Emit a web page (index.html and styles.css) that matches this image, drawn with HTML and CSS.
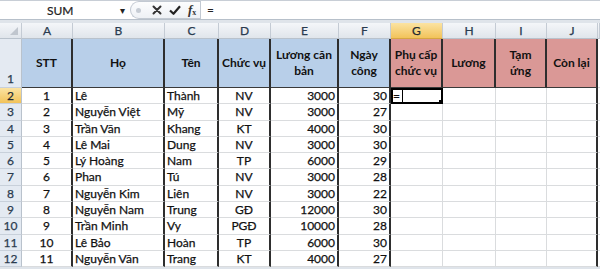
FILE: index.html
```html
<!DOCTYPE html>
<html lang="vi">
<head>
    <meta charset="UTF-8">
    <meta name="viewport" content="width=device-width, initial-scale=1.0">
    <title>Bảng lương</title>
    <link rel="stylesheet" href="styles.css">
</head>
<body>
    <div class="formula-bar">
        <div class="name-box">
            <span class="name">SUM</span>
            <span class="drop">&#9662;</span>
        </div>
        <div class="fx-tools">
            <span class="grip"></span>
            <svg class="ico" viewBox="0 0 10 10" width="10" height="10">
                <path d="M1.5 1.5 L8.5 8.5 M8.5 1.5 L1.5 8.5" stroke="#333" stroke-width="2" stroke-linecap="round"/>
            </svg>
            <svg class="ico" viewBox="0 0 12 10" width="12" height="10">
                <path d="M1 5.5 L4.5 8.8 L11 1.2" stroke="#222" stroke-width="2.2" fill="none" stroke-linejoin="round"/>
            </svg>
            <span class="fx"><i>f</i><sub>x</sub></span>
        </div>
        <div class="formula-input">=</div>
    </div>

    <div class="sheet">
        <div class="heads">
            <div class="h corner"></div>
            <div class="h">A</div>
            <div class="h">B</div>
            <div class="h">C</div>
            <div class="h">D</div>
            <div class="h">E</div>
            <div class="h">F</div>
            <div class="h active">G</div>
            <div class="h">H</div>
            <div class="h">I</div>
            <div class="h">J</div>
            <div class="h"></div>
        </div>

        <div class="row title">
            <div class="c rh">1</div>
            <div class="c blue">STT</div>
            <div class="c blue">Họ</div>
            <div class="c blue">Tên</div>
            <div class="c blue">Chức vụ</div>
            <div class="c blue">Lương căn<br>bản</div>
            <div class="c blue">Ngày<br>công</div>
            <div class="c pink">Phụ cấp<br>chức vụ</div>
            <div class="c pink">Lương</div>
            <div class="c pink">Tạm<br>ứng</div>
            <div class="c pink">Còn lại</div>
            <div class="c"></div>
        </div>

        <div class="row">
            <div class="c rh active">2</div>
            <div class="c ctr">1</div><div class="c">Lê</div><div class="c">Thành</div><div class="c ctr">NV</div>
            <div class="c num">3000</div><div class="c num">30</div>
            <div class="c cur"><span class="caret">=</span></div><div class="c"></div><div class="c"></div><div class="c"></div><div class="c"></div>
        </div>
        <div class="row">
            <div class="c rh">3</div>
            <div class="c ctr">2</div><div class="c">Nguyễn Việt</div><div class="c">Mỹ</div><div class="c ctr">NV</div>
            <div class="c num">3000</div><div class="c num">27</div>
            <div class="c"></div><div class="c"></div><div class="c"></div><div class="c"></div><div class="c"></div>
        </div>
        <div class="row">
            <div class="c rh">4</div>
            <div class="c ctr">3</div><div class="c">Trần Văn</div><div class="c">Khang</div><div class="c ctr">KT</div>
            <div class="c num">4000</div><div class="c num">30</div>
            <div class="c"></div><div class="c"></div><div class="c"></div><div class="c"></div><div class="c"></div>
        </div>
        <div class="row">
            <div class="c rh">5</div>
            <div class="c ctr">4</div><div class="c">Lê Mai</div><div class="c">Dung</div><div class="c ctr">NV</div>
            <div class="c num">3000</div><div class="c num">30</div>
            <div class="c"></div><div class="c"></div><div class="c"></div><div class="c"></div><div class="c"></div>
        </div>
        <div class="row">
            <div class="c rh">6</div>
            <div class="c ctr">5</div><div class="c">Lý Hoàng</div><div class="c">Nam</div><div class="c ctr">TP</div>
            <div class="c num">6000</div><div class="c num">29</div>
            <div class="c"></div><div class="c"></div><div class="c"></div><div class="c"></div><div class="c"></div>
        </div>
        <div class="row">
            <div class="c rh">7</div>
            <div class="c ctr">6</div><div class="c">Phan</div><div class="c">Tú</div><div class="c ctr">NV</div>
            <div class="c num">3000</div><div class="c num">28</div>
            <div class="c"></div><div class="c"></div><div class="c"></div><div class="c"></div><div class="c"></div>
        </div>
        <div class="row">
            <div class="c rh">8</div>
            <div class="c ctr">7</div><div class="c">Nguyễn Kim</div><div class="c">Liên</div><div class="c ctr">NV</div>
            <div class="c num">3000</div><div class="c num">22</div>
            <div class="c"></div><div class="c"></div><div class="c"></div><div class="c"></div><div class="c"></div>
        </div>
        <div class="row">
            <div class="c rh">9</div>
            <div class="c ctr">8</div><div class="c">Nguyễn Nam</div><div class="c">Trung</div><div class="c ctr">GĐ</div>
            <div class="c num">12000</div><div class="c num">30</div>
            <div class="c"></div><div class="c"></div><div class="c"></div><div class="c"></div><div class="c"></div>
        </div>
        <div class="row">
            <div class="c rh">10</div>
            <div class="c ctr">9</div><div class="c">Trần Minh</div><div class="c">Vy</div><div class="c ctr">PGĐ</div>
            <div class="c num">10000</div><div class="c num">28</div>
            <div class="c"></div><div class="c"></div><div class="c"></div><div class="c"></div><div class="c"></div>
        </div>
        <div class="row">
            <div class="c rh">11</div>
            <div class="c ctr">10</div><div class="c">Lê Bảo</div><div class="c">Hoàn</div><div class="c ctr">TP</div>
            <div class="c num">6000</div><div class="c num">30</div>
            <div class="c"></div><div class="c"></div><div class="c"></div><div class="c"></div><div class="c"></div>
        </div>
        <div class="row">
            <div class="c rh">12</div>
            <div class="c ctr">11</div><div class="c">Nguyễn Văn</div><div class="c">Trang</div><div class="c ctr">KT</div>
            <div class="c num">4000</div><div class="c num">27</div>
            <div class="c"></div><div class="c"></div><div class="c"></div><div class="c"></div><div class="c"></div>
        </div>
    </div>
</body>
</html>
```

FILE: styles.css
```css
body {
    margin: 0;
    background: #dfe4ea;
    font-family: Lato, "Liberation Sans", sans-serif;
    font-size: 12px;
    color: #111;
}

/* formula bar */
.formula-bar {
    display: flex;
    height: 18px;
    background: #fff;
    border-top: 1px solid #c8ced6;
    border-bottom: 1px solid #b7c0ca;
    margin-bottom: 3px;
}
.name-box {
    width: 130px;
    display: flex;
    align-items: center;
}
.name-box .name {
    flex: 1;
    padding-left: 47px;
    color: #222;
    -webkit-text-stroke: 0.2px #222;
}
.name-box .drop {
    font-size: 10px;
    color: #222;
    margin-right: 5px;
}
.fx-tools {
    width: 70px;
    display: flex;
    align-items: center;
    gap: 7px;
    border: 1px solid #c2c9d2;
    border-right: none;
    border-radius: 9px 0 0 9px;
    background: linear-gradient(#fcfdfe, #eef1f5);
    box-sizing: border-box;
}
.grip {
    width: 5px;
    height: 5px;
    margin-left: 5px;
    margin-right: 4px;
    border-radius: 50%;
    background: #c6ccd4;
}
.fx {
    font-family: "Liberation Serif", serif;
    font-size: 13px;
    font-weight: bold;
    color: #333;
    line-height: 1;
}
.fx sub {
    font-size: 8px;
    vertical-align: -1px;
}
.formula-input {
    flex: 1;
    border-left: 1px solid #c2c9d2;
    padding-left: 6px;
    line-height: 18px;
    color: #222;
}

/* grid */
.sheet {
    --cols: 22px 51px 92px 54px 52px 68px 52px 52px 53px 51px 51px 1fr;
    background: #fff;
}
.heads, .row {
    display: grid;
    grid-template-columns: var(--cols);
}
.heads {
    height: 16px;
}
.h {
    background: linear-gradient(#f4f6f9, #e0e5eb);
    border-right: 1px solid #c4cbd4;
    border-bottom: 1px solid #b9c2cc;
    color: #2a3b4f;
    text-align: center;
    line-height: 15px;
    font-size: 12px;
    -webkit-text-stroke: 0.25px #2a3b4f;
    box-sizing: border-box;
}
.h.active {
    background: linear-gradient(#fbe3a2, #f2c35a);
    border-bottom-color: #d8a640;
    color: #222;
}
.h.corner {
    position: relative;
}
.h.corner::after {
    content: "";
    position: absolute;
    right: 3px;
    bottom: 3px;
    border-left: 8px solid transparent;
    border-bottom: 8px solid #c0c6ce;
}

.row {
    height: 16.3px;
}
.c {
    border-right: 1px solid #dadcde;
    border-bottom: 1px solid #dadcde;
    padding: 0 2px;
    line-height: 16px;
    white-space: nowrap;
    overflow: hidden;
    -webkit-text-stroke: 0.25px #111;
    box-sizing: border-box;
}
.row .c:nth-child(n+2):nth-child(-n+7),
.row .c:nth-child(11) {
    border-right: 2px solid #2e2e2e;
}
.ctr {
    text-align: center;
}
.num {
    text-align: right;
}
.rh {
    background: #e4eaf2;
    border-right: 1px solid #b9c2cc;
    border-bottom-color: #c8d0da;
    color: #2a3b4f;
    text-align: center;
    padding: 0;
    -webkit-text-stroke: 0.25px #2a3b4f;
}
.rh.active {
    background: linear-gradient(#fbe3a2, #f2c35a);
    color: #222;
}

/* header row */
.row.title {
    height: 49px;
}
.title .c {
    display: flex;
    align-items: center;
    justify-content: center;
    text-align: center;
    font-weight: bold;
    white-space: normal;
    -webkit-text-stroke: 0;
    border-bottom: 1px solid #3a3a3a;
}
.title .c:nth-child(n+2):nth-child(-n+11) {
    border-right: 2px solid #2e2e2e;
}
.title .rh {
    align-items: flex-end;
    font-weight: normal;
    -webkit-text-stroke: 0.25px #2a3b4f;
    border-bottom-color: #c8d0da;
}
.title .c:last-child {
    border-bottom-color: #dadcde;
}
.blue {
    background: #b8cfe9;
}
.pink {
    background: #da9896;
}

/* active cell */
.cur {
    position: relative;
    outline: 2px solid #000;
    outline-offset: -2px;
}
.cur::after {
    content: "";
    position: absolute;
    right: -1px;
    bottom: -1px;
    width: 4px;
    height: 4px;
    background: #000;
}
.caret {
    border-right: 1px solid #000;
    padding-right: 2px;
}
```
